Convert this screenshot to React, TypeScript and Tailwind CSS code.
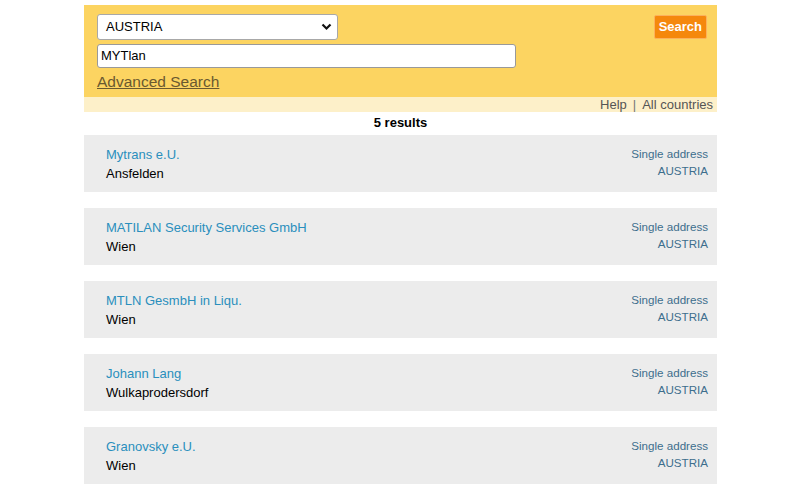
import React from "react";

const results = [
  { name: "Mytrans e.U.", city: "Ansfelden" },
  { name: "MATILAN Security Services GmbH", city: "Wien" },
  { name: "MTLN GesmbH in Liqu.", city: "Wien" },
  { name: "Johann Lang", city: "Wulkaprodersdorf" },
  { name: "Granovsky e.U.", city: "Wien" },
];

export default function App() {
  return (
    <div className="min-h-[490px] bg-white pt-[5px] font-['Liberation_Sans',Arial,sans-serif]">
      <div className="ml-[84px] w-[633px]">
        <div className="flex h-[92px] justify-between bg-[#fcd461]">
          <div className="flex flex-col pl-[13px] pt-[9px]">
            <div className="flex h-[26px] w-[241px] items-center justify-between rounded-[3px] border border-[#a8a8a8] bg-white pl-[8px] pr-[5px] text-[13px] text-black">
              <span>AUSTRIA</span>
              <svg width="11" height="8" viewBox="0 0 11 8">
                <path d="M1.5 1.5 L5.5 5.5 L9.5 1.5" fill="none" stroke="#111" strokeWidth="2.2" />
              </svg>
            </div>
            <div className="mt-[4px] flex h-[24px] w-[419px] items-center rounded-[3px] border border-[#999] bg-white pl-[3px] text-[13px] text-black">
              MYTlan
            </div>
            <a className="mt-[5px] text-[15.5px] leading-[18px] text-[#6a5930] underline">Advanced Search</a>
          </div>
          <div className="pr-[10px] pt-[10px]">
            <div className="flex h-[24px] items-center rounded-[2px] border border-[#fcb25c] bg-[#f5880c] px-[4px] text-[13px] font-bold text-white">
              Search
            </div>
          </div>
        </div>
        <div className="flex h-[15px] items-center justify-end bg-[#fdf0c9] pr-[4px] text-[13px] text-[#555]">
          Help <span className="mx-[6px] text-[#777]">|</span> All countries
        </div>
        <div className="flex h-[23px] items-start justify-center pt-[3px] text-[13px] font-bold leading-[15px] text-black">5 results</div>
        <div className="flex flex-col gap-[16px]">
          {results.map((r) => (
            <div key={r.name} className="flex h-[57px] justify-between bg-[#ececec] pl-[22px] pr-[9px] pt-[12px]">
              <div className="flex flex-col gap-[4px]">
                <span className="text-[13px] leading-[15px] text-[#2a8fbd]">{r.name}</span>
                <span className="text-[13px] leading-[15px] text-black">{r.city}</span>
              </div>
              <div className="flex flex-col items-end gap-[3px]">
                <span className="text-[11.6px] leading-[14px] text-[#3d6e8d]">Single address</span>
                <span className="text-[11.6px] leading-[14px] text-[#3d6e8d]">AUSTRIA</span>
              </div>
            </div>
          ))}
        </div>
      </div>
    </div>
  );
}
